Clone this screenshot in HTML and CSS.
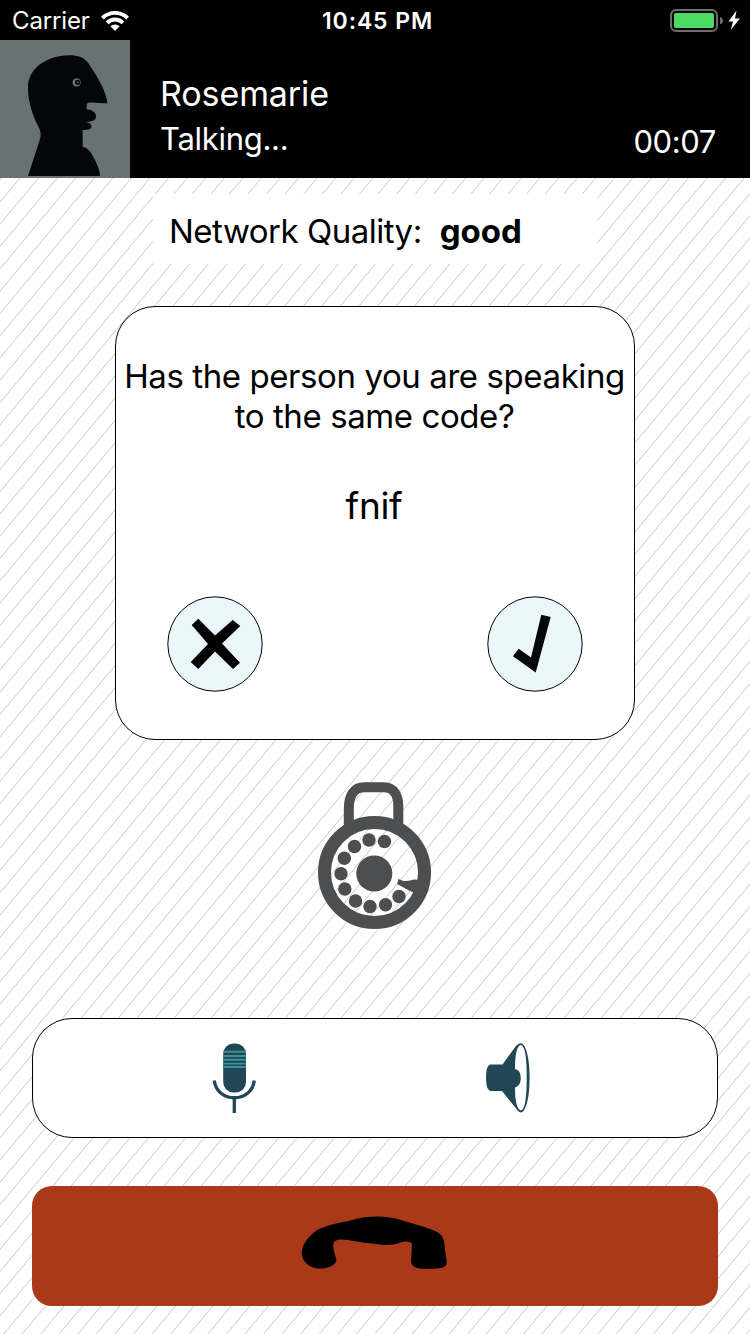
FILE: index.html
```html
<!DOCTYPE html>
<html lang="en">
<head>
<meta charset="utf-8">
<title>Call</title>
<link rel="stylesheet" href="styles.css">
</head>
<body>
<div class="status">
  <div class="status-left">
    <span class="carrier">Carrier</span>
    <svg class="wifi" width="28" height="20" viewBox="0 0 28 20">
      <g fill="none" stroke="#fff" stroke-width="3.9">
        <path d="M1.4 7.1a17.9 17.9 0 0 1 25.2 0"/>
        <path d="M6 11.8a11.5 11.5 0 0 1 16 0"/>
      </g>
      <path d="M9.4 15.3a6.6 6.6 0 0 1 9.2 0L14 20z" fill="#fff"/>
    </svg>
  </div>
  <span class="clock">10:45 PM</span>
  <div class="status-right">
    <svg width="72" height="24" viewBox="0 0 72 24">
      <rect x="1" y="1" width="46" height="21" rx="5" fill="none" stroke="#6c6c6c" stroke-width="2"/>
      <rect x="4" y="4" width="40" height="15" rx="2" fill="#4cd964"/>
      <path d="M50 8q3 1 3 3.700t-3 3.700z" fill="#6c6c6c"/>
      <path d="M66.500 1.500L58.500 12.500h4.500L60.800 20.800L70 9.500h-5z" fill="#fff"/>
    </svg>
  </div>
</div>
<header class="caller">
  <svg class="avatar" width="130" height="138" viewBox="0 120 390 414">
    <rect y="120" width="390" height="414" fill="#677271"/>
    <path d="M84 528L118 424C125 405 122 395 116 382C100 350 84 310 84 265C82 200 150 166 208 166C235 166 252 172 265 190C290 225 322 280 322 310C305 310 285 306 265 308C258 310 261 322 260 328C278 330 288 338 288 350C288 362 270 366 254 366C272 368 275 375 274 382C272 390 258 390 248 390V440C268 445 275 460 285 480C293 497 300 515 300 528z" fill="#040607"/>
    <circle cx="230" cy="247" r="12.500" fill="#677271"/>
    <circle cx="233" cy="247" r="6" fill="#3c4444" stroke="#040607" stroke-width="4"/>
  </svg>
  <div class="caller-info">
    <div class="name">Rosemarie</div>
    <div class="row"><span class="state">Talking...</span><span class="timer">00:07</span></div>
  </div>
</header>
<main class="call">
  <div class="quality"><span class="q-label">Network Quality:</span><b class="q-value">good</b></div>
  <section class="card">
    <p class="question">Has the person you are speaking<br>to the same code?</p>
    <p class="code">fnif</p>
    <div class="answers">
      <svg width="96" height="96" viewBox="0 0 96 96">
        <circle cx="48" cy="48" r="47.200" fill="#eaf6f9" stroke="#000"/>
        <path d="M24.700 29L31.300 22.700L48 39.500L65.700 24L73.300 30L55 47.500L73 66.700L66 73L48 55.500L31.300 73L23.700 66L41 48z" fill="#000"/>
      </svg>
      <svg width="96" height="96" viewBox="0 0 96 96">
        <circle cx="48" cy="48" r="47.200" fill="#eaf6f9" stroke="#000"/>
        <path d="M54.300 18.700L63.700 21L48.700 76.500L26 60.300L31.700 52.700L44 61.500z" fill="#040607"/>
      </svg>
    </div>
  </section>
  <svg class="lock" width="120" height="152" viewBox="315 780 120 152">
    <path d="M348.800 829V809C348.800 794 355 787.300 364 787.300H384C394 787.300 398.300 796 398.300 806V829" fill="none" stroke="#4d4e50" stroke-width="10"/>
    <circle cx="374.500" cy="872.500" r="50" fill="none" stroke="#4d4e50" stroke-width="13"/>
    <g fill="#4d4e50">
      <circle cx="374.300" cy="873.500" r="18"/>
      <circle cx="384.500" cy="841.500" r="6.700"/><circle cx="369" cy="840" r="6.700"/>
      <circle cx="354.500" cy="846.500" r="6.700"/><circle cx="344.300" cy="858.300" r="6.700"/>
      <circle cx="341" cy="873.700" r="6.700"/><circle cx="344.800" cy="889" r="6.700"/>
      <circle cx="355.500" cy="901" r="6.700"/><circle cx="370" cy="906.500" r="6.700"/>
      <circle cx="385.500" cy="904.800" r="6.700"/><circle cx="399" cy="896.500" r="6.700"/>
      <path d="M398.500 879L403.500 881Q409 881 414 879.500L420 880V892L412 892L397 884z"/>
    </g>
  </svg>
  <div class="controls">
    <svg width="46" height="72" viewBox="0 0 46 72">
      <path d="M2.300 37.500C5 60.500 39.600 60.500 42.300 37.500" fill="none" stroke="#214757" stroke-width="3.300"/>
      <path d="M22.300 55V70" stroke="#214757" stroke-width="3.300"/>
      <rect x="11.200" y="0.500" width="22.800" height="49" rx="10.500" fill="#214757"/>
      <path d="M11.200 8.800h22.800M11.200 13h22.800M11.200 16.800h22.800M11.200 20.600h22.800M11.200 24h22.800" stroke="#3d9096" stroke-width="1.900"/>
    </svg>
    <svg width="46" height="72" viewBox="0 0 46 72">
      <path d="M17.500 21.500L30.500 3.500Q36 -2.500 39.500 3Q44.600 13 44.600 34.500Q44.600 57 39.500 66.500Q36 72.500 31.500 66L17 48H5Q1 46 1 34.500Q1 23 5 21.500z" fill="#214757"/>
      <path d="M30 26Q30 3 36 2Q41.700 3 41.700 34.500Q41.700 66 36 67.500Q30 66 30 44.500Q35.800 43 35.800 35Q35.800 27 30 26z" fill="#fff"/>
    </svg>
  </div>
  <div class="hangup">
    <svg width="148" height="54" viewBox="30 45 444 162">
      <path d="M35 160C36 130 60 105 78 92C110 72 160 68 200 56C240 48 290 47 325 58C370 72 410 82 435 93C455 102 463 115 464 140L470 185C471 203 455 206 420 206C385 207 363 205 363 180L366 133C362 122 345 123 330 128C300 138 270 135 240 130C210 127 180 119 160 119C140 117 128 122 130 140C131 160 140 172 139 183C135 198 110 206 88 206C60 206 36 185 35 160z"/>
    </svg>
  </div>
</main>
</body>
</html>
```
FILE: styles.css
```css
* { box-sizing: border-box; }
body {
  margin: 0;
  width: 750px;
  height: 1334px;
  overflow: hidden;
  display: flex;
  flex-direction: column;
  font-family: Inter, "Noto Sans", sans-serif;
  background: #fff;
  color: #000;
}
svg { display: block; flex: none; }
p { margin: 0; }
span, b, p, .name { white-space: nowrap; }

.status {
  height: 40px;
  padding-top: 2px;
  background: #000;
  color: #fff;
  display: grid;
  grid-template-columns: 1fr auto 1fr;
  align-items: center;
  font-size: 24px;
  line-height: 38px;
}
.status-left { display: flex; align-items: center; gap: 11px; padding-left: 12px; }
.carrier { letter-spacing: -0.15px; }
.wifi { margin-top: -1px; }
.status-right { display: flex; justify-content: flex-end; padding-right: 8px; }
.clock { font-weight: 600; font-size: 23px; letter-spacing: 0.9px; padding-left: 5px; }

.caller { height: 138px; display: flex; background: #000; color: #fff; }
.caller-info { flex: 1; padding: 32px 34px 0 30px; }
.name { font-size: 34px; line-height: 44px; letter-spacing: -0.1px; }
.row { display: flex; justify-content: space-between; align-items: center; }
.state { font-size: 31px; line-height: 42px; letter-spacing: -0.3px; margin-top: -2px; }
.timer { font-size: 31px; line-height: 42px; letter-spacing: -0.4px; margin-top: 5px; }

.call {
  flex: 1;
  padding: 16px 32px 28px;
  display: flex;
  flex-direction: column;
  align-items: center;
  background: repeating-linear-gradient(129.81deg, #fff 0, #fff 0.4px, #cbcbcb 1px, #cbcbcb 1.2px, #fff 1.8px, #fff 14.265px);
}
.quality {
  width: 444px;
  height: 70px;
  padding: 4px 0 0 16px;
  background: #fff;
  display: flex;
  align-items: center;
  gap: 18px;
  font-size: 33px;
}
.q-label { letter-spacing: -0.5px; }
.card {
  width: 520px;
  height: 434px;
  margin-top: 42px;
  padding-top: 49px;
  border: 1px solid #000;
  border-radius: 40px;
  background: #fff;
  text-align: center;
}
.question { font-size: 33px; line-height: 40px; letter-spacing: -0.41px; margin-left: -1px; }
.code { font-size: 37px; line-height: 48px; letter-spacing: -0.3px; margin: 46px 0 0 -2px; }
.answers { display: flex; justify-content: space-between; padding: 0 51px; margin-top: 66px; }
.lock { margin-top: 40px; }
.controls {
  width: 686px;
  height: 120px;
  margin-top: 86px;
  padding: 24px 186px 0 179px;
  display: flex;
  justify-content: space-between;
  border: 1px solid #000;
  border-radius: 40px;
  background: #fff;
}
.hangup {
  width: 686px;
  height: 120px;
  margin-top: 48px;
  padding: 29px 0 0 268px;
  border-radius: 20px;
  background: #a93918;
}
```
